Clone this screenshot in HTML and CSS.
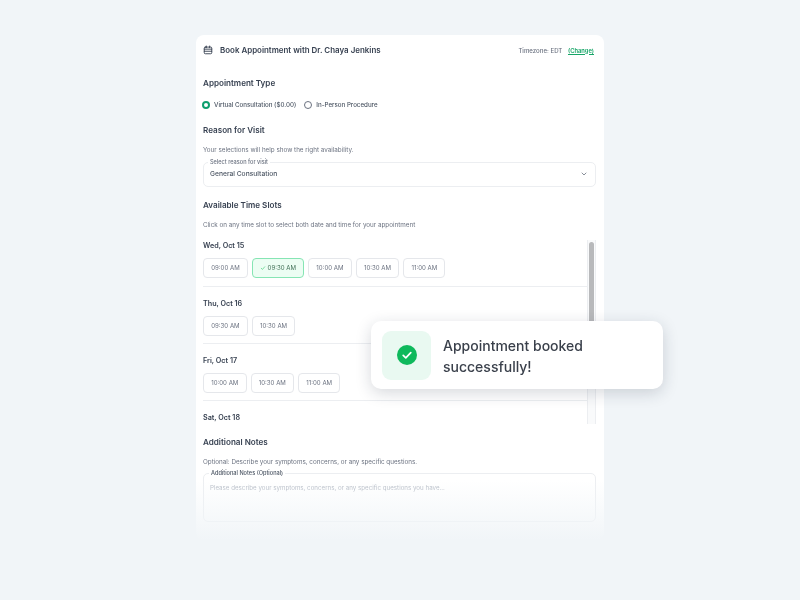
FILE: index.html
```html
<!DOCTYPE html>
<html lang="en">
<head>
<meta charset="UTF-8">
<meta name="viewport" content="width=device-width, initial-scale=1.0">
<title>Book Appointment</title>
<link rel="stylesheet" href="styles.css">
</head>
<body>
<div class="card">
  <div class="card-header">
    <div class="title-group">
      <svg class="calendar-icon" viewBox="0 0 24 24" fill="none" stroke="#374151" stroke-width="2.2" stroke-linecap="round" stroke-linejoin="round">
        <rect x="3" y="5" width="18" height="16" rx="2.5"/>
        <path d="M8 2.5v4M16 2.5v4M3 10h18M3 15h18"/>
      </svg>
      <span class="card-title">Book Appointment with Dr. Chaya Jenkins</span>
    </div>
    <div class="timezone">Timezone: EDT <a class="change-link">(Change)</a></div>
  </div>

  <h2 class="section-title first">Appointment Type</h2>
  <div class="radio-row">
    <span class="radio checked"></span><span class="radio-label">Virtual Consultation ($0.00)</span>
    <span class="radio"></span><span class="radio-label">In-Person Procedure</span>
  </div>

  <h2 class="section-title reason">Reason for Visit</h2>
  <p class="helper">Your selections will help show the right availability.</p>
  <div class="select-box">
    <span class="float-label">Select reason for visit</span>
    <span>General Consultation</span>
    <svg class="chevron" viewBox="0 0 12 12" fill="none" stroke="#6b7280" stroke-width="1.2" stroke-linecap="round" stroke-linejoin="round"><path d="M3 4.5l3 3 3-3"/></svg>
  </div>

  <h2 class="section-title slots-title">Available Time Slots</h2>
  <p class="helper">Click on any time slot to select both date and time for your appointment</p>

  <div class="slots-scroll">
    <div class="slots-list">
      <div class="day">
        <div class="day-name">Wed, Oct 15</div>
        <div class="slot-row">
          <button class="slot">09:00 AM</button>
          <button class="slot selected"><svg class="tick" viewBox="0 0 12 12" fill="none" stroke="#22c55e" stroke-width="1.1" stroke-linecap="round" stroke-linejoin="round"><path d="M2.5 6.5l2.4 2.4 4.6-5.4"/></svg>09:30 AM</button>
          <button class="slot">10:00 AM</button>
          <button class="slot">10:30 AM</button>
          <button class="slot">11:00 AM</button>
        </div>
      </div>
      <div class="day">
        <div class="day-name">Thu, Oct 16</div>
        <div class="slot-row">
          <button class="slot">09:30 AM</button>
          <button class="slot">10:30 AM</button>
        </div>
      </div>
      <div class="day">
        <div class="day-name">Fri, Oct 17</div>
        <div class="slot-row">
          <button class="slot">10:00 AM</button>
          <button class="slot">10:30 AM</button>
          <button class="slot">11:00 AM</button>
        </div>
      </div>
      <div class="day last">
        <div class="day-name">Sat, Oct 18</div>
      </div>
    </div>
    <div class="scroll-track"><div class="scroll-thumb"></div></div>
  </div>

  <h2 class="section-title notes-title">Additional Notes</h2>
  <p class="helper">Optional: Describe your symptoms, concerns, or any specific questions.</p>
  <div class="notes-box">
    <span class="float-label notes-label">Additional Notes (Optional)</span>
    <span class="placeholder">Please describe your symptoms, concerns, or any specific questions you have...</span>
  </div>
</div>

<div class="fade"></div>

<div class="toast">
  <div class="toast-icon">
    <svg viewBox="0 0 20 20" width="20" height="20">
      <circle cx="10" cy="10" r="10" fill="#0fb95c"/>
      <path d="M6.2 10.3l2.6 2.5 5-5.2" fill="none" stroke="#fff" stroke-width="1.7" stroke-linecap="round" stroke-linejoin="round"/>
    </svg>
  </div>
  <div class="toast-text">Appointment booked successfully!</div>
</div>
</body>
</html>
```

FILE: styles.css
```css
* {
  box-sizing: border-box;
}

body {
  margin: 0;
  height: 600px;
  overflow: hidden;
  background: #f1f5f8;
  font-family: Inter, "Liberation Sans", sans-serif;
  color: #374151;
}

.card {
  width: 408px;
  height: 505px;
  margin: 35px 0 0 196px;
  padding: 0 8px 0 7px;
  background: #fff;
  border-radius: 8px;
  filter: blur(0.45px);
}

.card-header {
  display: flex;
  justify-content: space-between;
  align-items: center;
  height: 30px;
}

.title-group {
  display: flex;
  align-items: center;
  gap: 7px;
}

.calendar-icon {
  width: 10px;
  height: 10px;
}

.card-title {
  font-size: 7.95px;
  font-weight: 600;
  color: #374151;
}

.timezone {
  font-size: 6.1px;
  font-weight: 500;
  color: #6b7280;
  margin-right: 2px;
}

.change-link {
  margin-left: 4px;
  font-size: 5.8px;
  color: #16a567;
  font-weight: 600;
  text-decoration: underline;
}

.section-title {
  margin: 0;
  font-size: 8.1px;
  line-height: 12px;
  font-weight: 600;
  color: #374151;
}

.section-title.first {
  margin-top: 12px;
}

.section-title.reason {
  margin-top: 14px;
}

.section-title.slots-title {
  margin-top: 12px;
}

.section-title.notes-title {
  margin-top: 12px;
}

.helper {
  margin: 9px 0 0;
  font-size: 6.3px;
  line-height: 10px;
  color: #6b7280;
}

.radio-row {
  display: flex;
  align-items: center;
  margin-top: 10.5px;
  margin-bottom: 0.5px;
  height: 10px;
  font-size: 6.2px;
  font-weight: 500;
  color: #4b5563;
}

.radio {
  width: 8px;
  height: 8px;
  border: 1px solid #6b7280;
  border-radius: 50%;
  margin-left: 8px;
  margin-right: 4px;
}

.radio.checked {
  margin-left: -1px;
  border: 2.5px solid #0d9f6e;
}

.select-box {
  position: relative;
  display: flex;
  justify-content: space-between;
  align-items: center;
  height: 25px;
  margin-top: 7px;
  padding: 0 7px 0 6px;
  border: 1px solid #eceef1;
  border-radius: 5px;
  font-size: 6.7px;
  font-weight: 500;
  color: #4b5563;
}

.float-label {
  position: absolute;
  left: 4px;
  top: -4px;
  padding: 0 2px;
  background: #fff;
  font-size: 5.6px;
  line-height: 7px;
  font-weight: 500;
  color: #6b7280;
}

.chevron {
  width: 8px;
  height: 8px;
}

.slots-scroll {
  display: flex;
  height: 184px;
  margin-top: 10px;
  overflow: hidden;
}

.slots-list {
  flex: 1;
}

.day {
  height: 57.3px;
  border-bottom: 1px solid #eceef1;
}

.day:first-child {
  height: 47px;
}

.day.last {
  border-bottom: 0;
}

.day-name {
  font-size: 7.2px;
  line-height: 11px;
  font-weight: 600;
  color: #374151;
}

.day:not(:first-child) .day-name {
  padding-top: 11px;
}

.slot-row {
  display: flex;
  gap: 4px;
  margin-top: 7px;
}

.slot {
  height: 20px;
  padding: 0 7.2px;
  background: #fff;
  border: 1px solid #e5e7eb;
  border-radius: 4px;
  font-family: inherit;
  font-size: 6.1px;
  color: #6b7280;
  white-space: nowrap;
}

.slot.selected {
  display: flex;
  align-items: center;
  background: #ecfdf3;
  border-color: #86e5b4;
  color: #3f6f55;
}

.tick {
  width: 6px;
  height: 6px;
  margin-right: 1.5px;
}

.scroll-track {
  width: 9px;
  margin-left: -1px;
  padding: 2px 1px;
  background: #f9fafb;
  border-left: 1px solid #eceef1;
  border-right: 1px solid #eceef1;
}

.scroll-thumb {
  width: 5px;
  height: 120px;
  background: #b8b9bb;
  border-radius: 3px;
}

.notes-box {
  position: relative;
  height: 49px;
  margin-top: 6px;
  padding: 10px 6px;
  border: 1px solid #eceef1;
  border-radius: 5px;
  font-size: 6.2px;
  line-height: 8px;
}

.notes-label {
  left: 5px;
  color: #4b5563;
}

.placeholder {
  color: #b6bcc6;
}

.fade {
  position: absolute;
  left: 190px;
  top: 480px;
  width: 420px;
  height: 60px;
  background: linear-gradient(to bottom, rgba(241, 245, 248, 0), #f1f5f8);
}

.toast {
  position: absolute;
  left: 371px;
  top: 321px;
  width: 292px;
  height: 68px;
  display: flex;
  align-items: center;
  gap: 12px;
  padding: 0 11px;
  background: #fff;
  border-radius: 10px;
  box-shadow: 0 4px 16px rgba(30, 41, 59, 0.18);
}

.toast-icon {
  display: flex;
  justify-content: center;
  align-items: center;
  flex: none;
  width: 49px;
  height: 49px;
  background: #e9f9f1;
  border-radius: 9px;
}

.toast-text {
  width: 170px;
  margin-top: 2px;
  font-size: 14px;
  line-height: 21px;
  font-weight: 500;
  color: #3a404b;
  filter: blur(0.3px);
}
```
